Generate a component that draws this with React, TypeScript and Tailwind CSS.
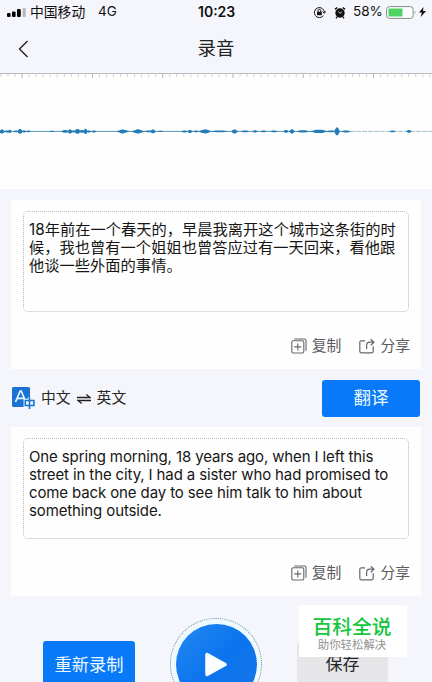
interface TextCardProps {
  text: string;
  lang: "zh" | "en";
}

// [x, length, amplitude] of every audible piece of the recording
const wave: [number, number, number][] = [
  [0, 4, 2], [4, 7, 1], [9, 2, 1.6], [14, 4, 0.8], [18, 4, 2.4], [22, 4, 1], [27, 3, 0.8],
  [50, 4, 0.7], [62, 6, 1.4], [68, 4, 2], [72, 3, 1], [75, 5, 2.3], [80, 4, 1.4], [84, 3, 2.6], [87, 4, 1], [92, 4, 1],
  [117, 12, 1.3], [120, 5, 2], [132, 12, 1.5], [135, 6, 2.1], [144, 12, 0.9], [151, 4, 1.9], [158, 5, 0.7],
  [182, 5, 1], [188, 4, 1.5], [194, 4, 0.9], [199, 12, 1.7], [203, 5, 2], [211, 17, 0.9],
  [232, 5, 2], [241, 8, 0.9], [253, 4, 1.2], [261, 5, 0.8], [271, 6, 0.8], [284, 4, 1.4], [290, 4, 2.2],
  [297, 12, 1.1], [311, 16, 1.7], [327, 8, 0.9], [335, 4, 3.8], [342, 8, 1], [390, 5, 0.8], [407, 4, 1.3],
];

const ticks = Array.from({ length: 63 }, (_, i) => i);

const StatusBar = () => (
  <div className="flex h-6 shrink-0 items-center pl-[7px] pr-[5px] text-[13.5px] leading-none text-[#111]">
    <svg width="19" height="9" viewBox="0 0 19 9" className="shrink-0">
      <rect x="0" y="5" width="3.6" height="4" rx="1" fill="#000" />
      <rect x="5" y="3.4" width="3.6" height="5.6" rx="1" fill="#000" />
      <rect x="10" y="1" width="3.8" height="8" rx="1" fill="#000" />
      <rect x="15.6" y="0" width="3.2" height="9" rx="1" fill="#b9b9bd" />
    </svg>
    <span className="ml-1 w-[68px] whitespace-nowrap pt-px text-[13.8px]">中国移动</span>
    <span className="w-[100px]">4G</span>
    <span className="w-[116px] text-[14px] font-semibold">10:23</span>
    <svg width="13" height="13" viewBox="0 0 13 13" className="-ml-px shrink-0" fill="none" stroke="#111">
      <path d="M10.4 9.6a5 5 0 1 1 1-3.2M9.6 5.8l1.8 1.5 1.3-1.9" strokeWidth="1" />
      <rect x="4" y="5.8" width="4.8" height="3.4" fill="#111" stroke="none" />
      <path d="M5 6V4.8a1.4 1.4 0 0 1 2.8 0V6" />
    </svg>
    <svg width="12" height="13" viewBox="0 0 12 13" className="ml-2 shrink-0">
      <circle cx="6" cy="7" r="4.7" fill="#111" />
      <path d="M1 3.4 3.2 1.5M11 3.4 8.8 1.5M3 11l-1 1.2M9 11l1 1.2" stroke="#111" strokeWidth="1.4" />
      <path d="M4.2 5.4 6 7.3 8 5.8" stroke="#fff" strokeWidth="0.8" fill="none" />
    </svg>
    <span className="ml-[7px] w-[33px] text-[13.5px]">58%</span>
    <svg width="31" height="13" viewBox="0 0 31 13" className="shrink-0">
      <rect x="0.6" y="0.6" width="26.6" height="11.8" rx="3" fill="#fdfdff" stroke="#858b88" />
      <rect x="2.5" y="2.5" width="14" height="8" rx="1" fill="#4fd264" />
      <path d="M28.8 4.8q1.4 1.7 0 3.4z" fill="#777" />
    </svg>
    <svg width="7" height="12" viewBox="0 0 7 12" className="ml-[2px] shrink-0">
      <path d="M4.5 1 0 6.6h2.8L1.8 11 7 5H4z" fill="#111" />
    </svg>
  </div>
);

const Waveform = () => (
  <div className="h-[116px] shrink-0 border-t border-[#bcbcc2] bg-[#fefefe]">
    <svg width="432" height="115" viewBox="0 0 432 115" className="block">
      {ticks.map((i) => (
        <path
          key={i}
          d={`M${i * 7.03 + 1} 0v${i % 10 === 3 ? 4 : 3}`}
          stroke={i % 10 === 3 ? "#b4b4ba" : "#d2d2d7"}
        />
      ))}
      <path d="M0 57.4H350" stroke="#4d8cab" strokeWidth="0.9" />
      <path d="M350 57.4H432" stroke="#8eafbe" strokeWidth="0.8" strokeDasharray="5 1" />
      {wave.map(([x, w, a]) => (
        <path
          key={x}
          d={`M${x - 1} 57.4L${x + w * 0.3} ${57.4 - a}H${x + w * 0.7}L${x + w + 1} 57.4L${x + w * 0.7} ${57.4 + a}H${x + w * 0.3}Z`}
          fill="#237cb5"
        />
      ))}
    </svg>
  </div>
);

const CopyIcon = () => (
  <svg width="16" height="16" viewBox="0 0 16 16" fill="none" stroke="#66666a" strokeWidth="1.1">
    <rect x="0.8" y="2.8" width="12" height="12.2" rx="1.5" />
    <path d="M3.3 1h10.2q1.5 0 1.5 1.5v10.3M6.8 5.4v7M3.3 8.9h7" />
  </svg>
);

const ShareIcon = () => (
  <svg width="16" height="16" viewBox="0 0 16 16" fill="none" stroke="#66666a" strokeWidth="1.2">
    <path d="M6 2.8H2.3Q.8 2.8.8 4.3v9Q.8 14.8 2.3 14.8h10.4q1.5 0 1.5-1.5V8.2" />
    <path d="M7.6 11V7.4q0-3.2 3.2-3.2h3.6M11.8 1.2l3.1 3-3.1 3" />
  </svg>
);

const TextCard = ({ text, lang }: TextCardProps) => (
  <div className="mx-[11px] h-[169px] shrink-0 bg-[#fefefe] px-3 pt-[11px]">
    <div className="h-[101px] rounded-[5px] border border-dotted border-[#b9b9be] px-[5px] pt-[9px] text-[#161616]">
      {lang === "zh" ? (
        <p className="whitespace-pre text-[15.28px] leading-[18.2px]">{text}</p>
      ) : (
        <p className="whitespace-pre text-[15px] leading-[18px] tracking-[-0.12px]">{text}</p>
      )}
    </div>
    <div className="mt-[23px] flex h-[22px] items-center justify-end text-[14.8px] text-[#5c5c60]">
      <CopyIcon />
      <span className="ml-[5px]">复制</span>
      <span className="ml-[18px]">
        <ShareIcon />
      </span>
      <span className="-mr-px ml-[5px]">分享</span>
    </div>
  </div>
);

const TranslateIcon = () => (
  <svg width="25" height="24" viewBox="0 0 25 24">
    <path d="M2.5 1h15Q19 1 19 2.5V14h-6v7H2.5Q1 21 1 19.5V2.5Q1 1 2.5 1z" fill="#1a73d2" />
    <path d="M4.5 16 9.2 5h1L14.5 15M6 12.3h7" fill="none" stroke="#e8f7ff" strokeWidth="1.7" />
    <path d="M18.5 11.5V23M14.3 14.5h8.6v5h-8.6z" fill="none" stroke="#edf8ff" strokeWidth="3.4" />
    <path d="M18.5 11.5V23M14.3 14.5h8.6v5h-8.6z" fill="none" stroke="#1a73d2" strokeWidth="1.6" />
  </svg>
);

export default function App() {
  return (
    <div className="relative flex h-[682px] w-[432px] flex-col overflow-hidden bg-[#f5f6fb] font-['Inter','Noto_Sans_CJK_SC',sans-serif]">
      <StatusBar />

      {/* Title */}
      <div className="grid h-[49px] shrink-0 grid-cols-3 items-center">
        <svg width="11" height="18" viewBox="0 0 11 18" className="ml-[18px]">
          <path d="M9.5 1 1.5 9l8 8" fill="none" stroke="#222" strokeWidth="1.4" />
        </svg>
        <h1 className="text-center text-[18.5px] leading-none text-[#222]">录音</h1>
      </div>

      <Waveform />

      <div className="h-[11px] shrink-0" />
      <TextCard
        lang="zh"
        text={"18年前在一个春天的，早晨我离开这个城市这条街的时\n候，我也曾有一个姐姐也曾答应过有一天回来，看他跟\n他谈一些外面的事情。"}
      />

      {/* Language switch */}
      <div className="flex h-[58px] shrink-0 items-center pl-[11px] pr-3">
        <TranslateIcon />
        <div className="ml-[5px] flex items-center pt-px text-[14.8px] text-[#27272a]">
          <span>中文</span>
          <svg width="14" height="10" viewBox="0 0 14 10" className="mx-[6px]">
            <path d="M0 3.5h13L9.3.6M14 6.500H1l3.7 2.9" fill="none" stroke="#222" strokeWidth="1.3" />
          </svg>
          <span>英文</span>
        </div>
        <button className="ml-auto h-[37px] w-[98px] rounded-[3px] bg-[#087af9] text-[17.5px] text-[#ecf9ff]">
          翻译
        </button>
      </div>

      <TextCard
        lang="en"
        text={"One spring morning, 18 years ago, when I left this\nstreet in the city, I had a sister who had promised to\ncome back one day to see him talk to him about\nsomething outside."}
      />

      {/* Recorder controls */}
      <div className="flex h-[87px] shrink-0 items-start pl-[43px]">
        <button className="mt-[45px] h-[47px] w-[92px] shrink-0 rounded-[3px] bg-[#087af9] text-[17.2px] text-[#ecf9ff]">
          重新录制
        </button>
        <div className="ml-[35px] mt-[22px] flex size-[92px] shrink-0 items-center justify-center rounded-full border border-dotted border-[#71899a] bg-[#eefaff]">
          <div className="flex size-[81px] items-center justify-center rounded-full bg-linear-to-br from-[#2288f2] via-[#0b74ee] to-[#1677e8]">
            <svg width="22" height="25" viewBox="0 0 22 25">
              <path
                d="M2 2.500v20L20 12.500z"
                fill="#fbfeff"
                stroke="#fbfeff"
                strokeWidth="3.500"
                strokeLinejoin="round"
              />
            </svg>
          </div>
        </div>
        <button className="ml-[35px] mt-[46px] h-[46px] w-[91px] shrink-0 rounded-[3px] bg-[#e6e6e9] text-[17px] text-[#252525]">
          保存
        </button>
      </div>

      {/* Watermark */}
      <div className="absolute left-[299px] top-[605px] flex h-[52px] w-[108px] flex-col items-center bg-white pr-[2px] pt-[11px]">
        <span className="text-[19.8px] font-medium leading-[22px] text-[#13c63a]">百科全说</span>
        <span className="text-[11.4px] leading-[15px] text-[#929292]">助你轻松解决</span>
      </div>
    </div>
  );
}
